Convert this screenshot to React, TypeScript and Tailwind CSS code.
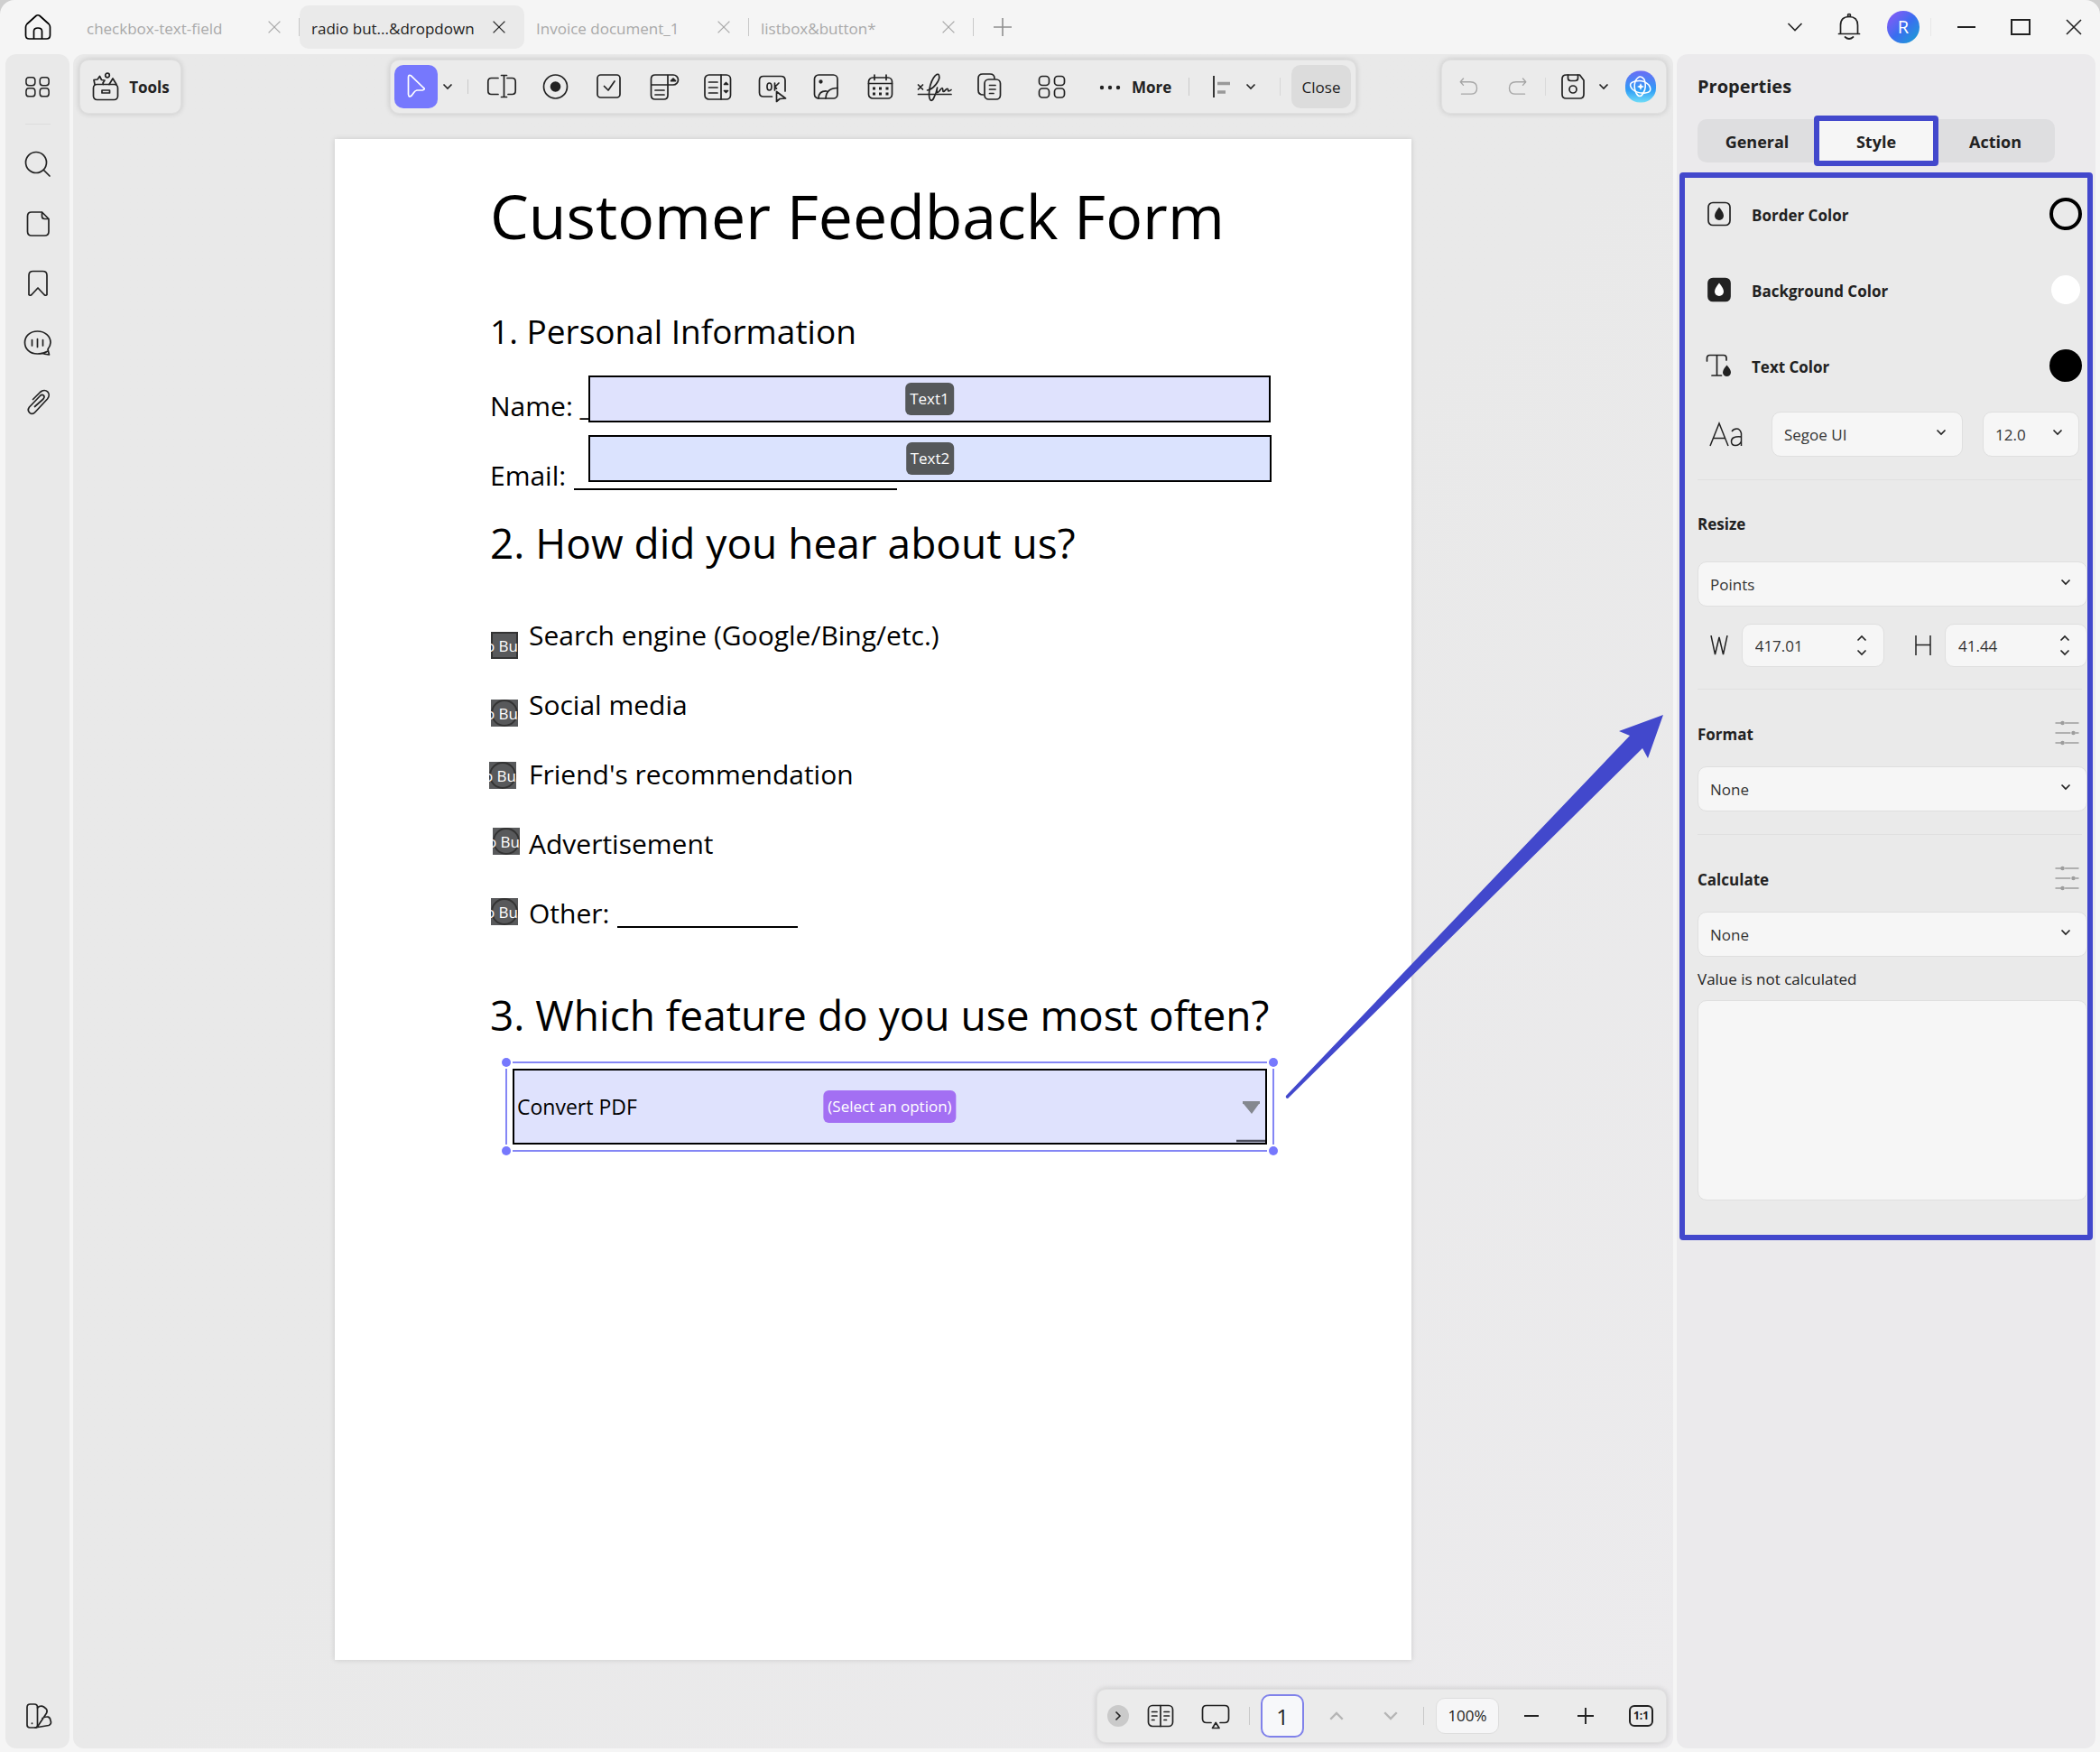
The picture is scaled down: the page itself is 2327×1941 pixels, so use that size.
import { useState, type ReactNode } from "react";

function Icon({ children, size = "size-8", className = "" }: { children: ReactNode; size?: string; className?: string }) {
  return (
    <svg
      viewBox="0 0 32 32"
      fill="none"
      stroke="currentColor"
      strokeWidth={1.7}
      strokeLinecap="round"
      strokeLinejoin="round"
      aria-hidden="true"
      className={`${size} shrink-0 ${className}`}
    >
      {children}
    </svg>
  );
}

const Chevron = ({ className = "" }: { className?: string }) => (
  <svg viewBox="0 0 12 12" fill="none" stroke="currentColor" strokeWidth={1.6} aria-hidden="true" className={`size-3 shrink-0 ${className}`}>
    <path d="M1.5 3.5 6 8l4.500-4.500" />
  </svg>
);

const Cross = ({ className = "" }: { className?: string }) => (
  <svg viewBox="0 0 20 20" fill="none" stroke="currentColor" strokeWidth={1.6} aria-hidden="true" className={`shrink-0 ${className}`}>
    <path d="M2 2l16 16M18 2 2 18" />
  </svg>
);

const Divider = ({ className = "" }: { className?: string }) => <span className={`w-px shrink-0 bg-[#c9c9c9] ${className}`} />;

const gridIcon = (
  <>
    <rect x="1.500" y="4.500" width="11" height="10" rx="3.500" />
    <rect x="18.500" y="4.500" width="11" height="10" rx="3.500" />
    <rect x="1.500" y="18" width="11" height="10" rx="3.500" />
    <rect x="18.500" y="18" width="11" height="10" rx="3.500" />
  </>
);

const tabs = [
  { name: "checkbox-text-field", active: false, divider: true },
  { name: "radio but...&dropdown", active: true, divider: false },
  { name: "Invoice document_1", active: false, divider: true },
  { name: "listbox&button*", active: false, divider: true },
];

const fieldTools: { label: string; icon: ReactNode }[] = [
  {
    label: "Text field",
    icon: (
      <>
        <path d="M12 6.500H4.500Q.8 6.500.8 10.500v10q0 4 3.700 4H12M22 6.500h5.500q3.700 0 3.700 4v10q0 4-3.700 4H23" />
        <path d="M18.500 3.500v24M15.500 3.500h6M15.500 27.500h6" />
      </>
    ),
  },
  {
    label: "Radio button",
    icon: (
      <>
        <circle cx="15.500" cy="16" r="13" />
        <circle cx="15.500" cy="16" r="5.800" fill="currentColor" stroke="none" />
      </>
    ),
  },
  {
    label: "Check box",
    icon: (
      <>
        <rect x="2" y="3" width="25" height="25" rx="3.500" />
        <path d="m9.500 15.500 4.500 4.500 7-10" />
      </>
    ),
  },
  {
    label: "Dropdown",
    icon: (
      <>
        <path d="M19.500 3H6Q1.500 3 1.500 7.500v18Q1.500 30 6 30h9.500q4.500 0 4.500-4.500V3M1.500 14H20M20 3h6a5.500 5.500 0 0 1 0 11h-6" />
        <path d="M6 20h10M6 25h10" />
        <path d="M23.500 9.700h5l-2.500-2.500z" fill="currentColor" />
      </>
    ),
  },
  {
    label: "List box",
    icon: (
      <>
        <rect x="1" y="3" width="28.500" height="27" rx="4.500" />
        <path d="M19 3v27M5.500 11H15M5.500 17H15M5.500 23H15" />
        <path d="M22.500 13.500h4l-2-2zM22.500 20.500h4l-2 2z" fill="currentColor" />
      </>
    ),
  },
  {
    label: "Button",
    icon: (
      <>
        <path d="M15.500 27H6Q1.500 27 1.500 22.500V9Q1.500 4.500 6 4.500h19.500Q30 4.500 30 9v12" />
        <ellipse cx="12.500" cy="16" rx="2.500" ry="4" />
        <path d="M18.500 12v8M23 12l-4.500 4.500 2 1.500" />
        <path d="M20.500 21.500v11l3.500-3 6.500-.5z" fill="#ebebeb" />
      </>
    ),
  },
  {
    label: "Image",
    icon: (
      <>
        <rect x="2.500" y="3" width="25.500" height="26" rx="4.500" />
        <path d="M7 29q0-8.500 9-8M15 29Q15.500 17.500 28 17.500" />
        <circle cx="9.500" cy="10.500" r="1.300" fill="currentColor" />
      </>
    ),
  },
  {
    label: "Date",
    icon: (
      <>
        <rect x="2.500" y="6" width="26" height="23" rx="4.500" />
        <path d="M2.500 12.500h26M9 3v5.500M22 3v5.500" />
        <path d="M7 18h3M14 18h3M21.500 18h3M7 24h3M14 24h3M21.500 24h3" strokeWidth="3" strokeLinecap="butt" />
      </>
    ),
  },
  {
    label: "Signature",
    icon: (
      <>
        <path d="M-2.500 14l5 5M2.500 14l-5 5M-2.500 24.500H34" />
        <path d="M7.500 20c6-.5 15-11 13-16.500C18.500-1.500 10 9 9.500 24c0 8 3 9 5 5 2.500-5 3.500-8 4-11.500.5-2-1.500 5.500.5 5s3.500-5 5-5 0 4 1.500 4 3-4 4.500-3 0 2.500 1 2.500 2-.5 3-1.500" />
      </>
    ),
  },
  {
    label: "Duplicate",
    icon: (
      <>
        <path d="M9.500 25Q4 25 4 20V7q0-5 5-5h8q5 0 5 5" />
        <rect x="11" y="8" width="17.500" height="22" rx="4.500" />
        <path d="M16.500 14.500H23M16.500 19H23M16.500 23.500H21" />
      </>
    ),
  },
];

const railTools: { label: string; icon: ReactNode }[] = [
  {
    label: "Search",
    icon: (
      <>
        <circle cx="14" cy="14" r="11.500" />
        <path d="m22.500 22.500 6.500 6.500" />
      </>
    ),
  },
  {
    label: "Pages",
    icon: <path d="M19.500 3H9Q4.500 3 4.500 7.500v17Q4.500 29 9 29h14.500q4.500 0 4.500-4.500v-14L20.500 3v4.500q0 3 3 3H28" />,
  },
  {
    label: "Bookmarks",
    icon: <path d="M6 28.500V7q0-4.500 4.500-4.500h11Q26 2.500 26 7v21.500q-1 1.500-3 0l-7-7.500-7 7.500q-2 1.500-3 0Z" />,
  },
  {
    label: "Comments",
    icon: (
      <>
        <path d="M26 25.500C22 28 19.500 28 15.500 28 7 28 1.500 22.500 1.500 15.500S7 3 15.500 3s14.500 5.500 14.500 12.500c0 3-1.500 5.500-3 7.500l1.500 6Q23 28.500 20.500 27.300" />
        <path d="M9.500 12.500v6.500M15.500 11.500v9M21.500 12.500v6.500" />
      </>
    ),
  },
  {
    label: "Attachments",
    icon: (
      <path d="M10.500 12.500 18.500 4.500c6-5.500 13 1.500 8 7.500L13 26.500c-4 4.500-10-.5-6.500-5.500L18.500 8.500c3-2.500 6 .5 3.500 3.500L12.500 20.500" />
    ),
  },
];

const options = [
  { name: "Search engine (Google/Bing/etc.)", box: "left-[173px] top-[546px]", ring: "" },
  { name: "Social media", box: "left-[173px] top-[621px]", ring: "rounded-full" },
  { name: "Friend's recommendation", box: "left-[171px] top-[690px]", ring: "rounded-full" },
  { name: "Advertisement", box: "left-[175px] top-[763px]", ring: "rounded-full" },
  { name: "Other:", box: "left-[173px] top-[841px]", ring: "rounded-full" },
];

function TitleBar() {
  return (
    <header className="flex h-[60px] shrink-0 items-center rounded-t-2xl bg-[#f5f5f5]">
      <button aria-label="Home" className="flex w-[83px] items-center justify-center">
        <Icon>
          <path d="M4 12.500 14 3.500q2-1.500 4 0l10 9q1.500 1.500 1.500 3.500V25q0 4-4 4h-19q-4 0-4-4v-9q0-2 1.500-3.500ZM11.500 29v-8.500q0-3.500 4.500-3.500t4.500 3.500V29" />
        </Icon>
      </button>
      <nav className="flex" aria-label="Documents">
        {tabs.map((tab) => (
          <div
            key={tab.name}
            className={`relative flex h-12 w-[249px] items-center justify-between rounded-[10px] pr-[20px] pl-[13px] ${
              tab.active ? "bg-[#eaeaea] text-[#222]" : "text-[#a9a9a9]"
            }`}
          >
            <button className="pt-1 text-[17px] leading-6 whitespace-nowrap">{tab.name}</button>
            <button aria-label={`Close ${tab.name}`}>
              <Cross className="size-4" />
            </button>
            {tab.divider && <Divider className="absolute top-[14px] right-0 h-5" />}
          </div>
        ))}
      </nav>
      <button aria-label="New tab" className="ml-[22px] text-[#8f8f8f]">
        <svg viewBox="0 0 20 20" className="size-5" stroke="currentColor" strokeWidth={1.6} aria-hidden="true">
          <path d="M10 0v20M0 10h20" />
        </svg>
      </button>
      <div className="ml-auto flex text-[#222]">
        <button aria-label="More documents" className="flex w-[60px] items-center justify-center">
          <svg viewBox="0 0 18 18" className="size-[18px]" fill="none" stroke="currentColor" strokeWidth={1.6} aria-hidden="true">
            <path d="m1.500 5 7.500 7.500L16.500 5" />
          </svg>
        </button>
        <button aria-label="Notifications" className="flex w-[60px] items-center justify-center">
          <Icon>
            <path d="M4.500 23.500h23M6.500 23.500V14q0-9.500 9.500-9.500T25.500 14v9.500M11.500 27q4.500 4 9 0" />
            <circle cx="16" cy="3" r="1.500" />
          </Icon>
        </button>
        <button aria-label="Account" className="flex w-[60px] items-center justify-center">
          <span className="flex size-9 items-center justify-center rounded-full bg-linear-to-br from-[#8a55f7] via-[#3a6cf0] to-[#0aa0d0] text-[20px] leading-9 text-white">
            R
          </span>
        </button>
        <span className="flex w-[10px] items-center">
          <Divider className="h-5 opacity-30" />
        </span>
        <button aria-label="Minimize" className="flex w-[60px] items-center justify-center">
          <span className="h-[2px] w-5 bg-[#222]" />
        </button>
        <button aria-label="Maximize" className="flex w-[60px] items-center justify-center">
          <span className="h-[18px] w-[22px] border-2 border-[#222]" />
        </button>
        <button aria-label="Close window" className="flex w-[58px] items-center justify-center">
          <Cross className="size-5" />
        </button>
      </div>
    </header>
  );
}

function Rail() {
  return (
    <aside className="flex w-[71px] shrink-0 flex-col items-center rounded-xl bg-[#e9e9e9] pt-5 pb-5 text-[#222]">
      <button aria-label="Thumbnails">
        <Icon className="scale-90">{gridIcon}</Icon>
      </button>
      <span className="mt-[25px] mb-7 h-px w-7 bg-[#dcdcdc]" />
      <div className="flex flex-col gap-[34px]">
        {railTools.map((tool) => (
          <button key={tool.label} aria-label={tool.label}>
            <Icon>{tool.icon}</Icon>
          </button>
        ))}
      </div>
      <button aria-label="Themes" className="mt-auto">
        <Icon>
          <path d="M7.500 3h4.500q3.500 0 3.500 3.500v20q0 2.500-2.500 2.500H7q-3 0-3-3V6.500Q4 3 7.500 3Z" />
          <path d="m15.500 7 2-1.500q3-1 5 .5l2.500 2q2 2 .5 5L15.500 28M21 18.500q8-4 9 2.500l.5 2q0 2.500-2.500 3.500L13 29" />
          <path d="M9.500 24v.5" />
        </Icon>
      </button>
    </aside>
  );
}

const panelShadow = "rounded-[10px] border border-[#e0e0e0] bg-[#ebebeb] shadow-[0_0_6px_rgba(0,0,0,0.16)]";

function Toolbar() {
  return (
    <div className="grid grid-cols-[1fr_auto_1fr] items-center px-[7px] pt-[6px] text-[#222]">
      <button className={`flex h-[60px] w-[113px] items-center justify-center gap-[10px] ${panelShadow}`}>
        <Icon>
          <rect x="2.500" y="13.500" width="27" height="17" rx="4" />
          <path d="M12 20h8.500v3H12zM4 13.500 3 8.500l4-.5 2.500-3.500 2 4 3.500.5-2 3 .5 1.500M20 13.500l4-6.500 4 6.500" />
          <circle cx="18" cy="3.500" r="2.300" />
        </Icon>
        <span className="pt-[2px] text-[17px] leading-6 font-bold">Tools</span>
      </button>

      <div className={`flex h-[60px] w-[1071px] items-center pr-[5px] pl-1 ${panelShadow}`}>
        <button aria-label="Select" className="flex size-12 items-center justify-center rounded-[10px] bg-[#7678fd] text-white">
          <Icon>
            <path d="M7.500 5.500v19q.5 4 3.500 1.500l3-4q1-1.500 3-2h6q4-1 1-3L10.500 3.800q-3-1.300-3 1.700Z" />
          </Icon>
        </button>
        <Chevron className="ml-[5px]" />
        <Divider className="mr-[7px] ml-4 h-4" />
        {fieldTools.map((tool) => (
          <button key={tool.label} aria-label={tool.label} className="flex h-12 w-[60px] items-center justify-center">
            <Icon className="overflow-visible">{tool.icon}</Icon>
          </button>
        ))}
        <button aria-label="Arrange" className="ml-6 flex">
          <Icon>{gridIcon}</Icon>
        </button>
        <button className="ml-9 flex items-center gap-3 pt-[2px] text-[17px] leading-6 font-bold">
          <svg viewBox="0 0 24 6" className="h-[6px] w-6" fill="currentColor" aria-hidden="true">
            <circle cx="3" cy="3" r="2.200" />
            <circle cx="12" cy="3" r="2.200" />
            <circle cx="21" cy="3" r="2.200" />
          </svg>
          More
        </button>
        <Divider className="ml-auto h-5" />
        <button aria-label="Align" className="ml-[26px] flex items-center gap-4">
          <svg viewBox="0 0 20 24" className="h-6 w-5" aria-hidden="true">
            <path d="M1 0v24" stroke="#222" strokeWidth="1.800" />
            <path d="M5 8.500h14M5 18h9" stroke="#999" strokeWidth="3.500" />
          </svg>
          <Chevron />
        </button>
        <Divider className="mr-3 ml-[26px] h-5 opacity-60" />
        <button className="h-12 w-[66px] rounded-[10px] bg-[#dcdcdc] pt-[2px] text-[17px] leading-6">Close</button>
      </div>

      <div className={`ml-auto flex h-[60px] w-[250px] items-center pr-[10px] pl-[17px] ${panelShadow}`}>
        <button aria-label="Undo" className="flex text-[#a6a6a6]">
          <Icon size="size-[26px]">
            <path d="M8 5 4 9.500 8 14M4 9.500h13.500q9 0 9 8.500t-9 8H5.500" />
          </Icon>
        </button>
        <button aria-label="Redo" className="ml-[27px] flex text-[#a6a6a6]">
          <Icon size="size-[26px]">
            <path d="m24 5 4 4.500-4 4.500M28 9.500H14.500q-9 0-9 8.500t9 8h12" />
          </Icon>
        </button>
        <Divider className="ml-[18px] h-5 opacity-50" />
        <button aria-label="Save" className="ml-[14px] flex items-center gap-3">
          <Icon>
            <path d="M8.500 3h15L28 9v15.500q0 4.500-4.500 4.500h-15Q4 29 4 24.500v-17Q4 3 8.500 3Z" />
            <path d="M10.500 3v3.500q0 3 3 3h5q3 0 3-3V3" />
            <ellipse cx="16" cy="19" rx="4" ry="4" />
          </Icon>
          <Chevron />
        </button>
        <button aria-label="AI assistant" className="ml-auto">
          <svg viewBox="0 0 36 36" className="size-9" aria-hidden="true">
            <defs>
              <linearGradient id="ai" x1="0" y1="0" x2="0" y2="1">
                <stop offset="0" stopColor="#6a6cf5" />
                <stop offset="0.600" stopColor="#2f9cf6" />
                <stop offset="1" stopColor="#6fdcf7" />
              </linearGradient>
            </defs>
            <rect x="1" y="0.500" width="34" height="35" rx="16" fill="url(#ai)" />
            <g fill="none" stroke="#fff" strokeWidth="1.600">
              <path d="M12 12q5-9 10-2 3 8-1 15-4 7-8 0-3-6-1-13Z" />
              <path d="M12 12q9-2 15 4 5 8-4 9-8 1-14-4-6-7 3-9Z" />
            </g>
            <path d="m18 14 1.200 2.800L22 18l-2.800 1.200L18 22l-1.200-2.800L14 18l2.800-1.200z" fill="#fff" />
          </svg>
        </button>
      </div>
    </div>
  );
}

function FieldTag({ children, className }: { children: ReactNode; className: string }) {
  return (
    <span className={`pointer-events-none absolute top-1/2 left-1/2 -translate-x-1/2 -translate-y-1/2 rounded-md px-[5px] text-[17px] leading-9 whitespace-nowrap ${className}`}>
      {children}
    </span>
  );
}

function Document() {
  return (
    <article className="relative mx-auto mt-7 h-[1685px] w-[1193px] bg-white pt-[37px] pl-[172px] text-[30px] text-black shadow-[0_0_6px_rgba(0,0,0,0.14)]">
      <h1 className="text-[68px] leading-[96px] whitespace-nowrap">Customer Feedback Form</h1>
      <h2 className="mt-[52px] text-[37px] leading-[56px]">1. Personal Information</h2>
      <p className="mt-[31px] leading-[48px]">
        <label htmlFor="name">Name:</label> _
      </p>
      <p className="mt-[29px] flex leading-[48px]">
        <label htmlFor="email">Email:</label>
        <span className="ml-[9px] h-10 w-[358px] border-b-2 border-black" />
      </p>
      <h2 className="mt-[18px] text-[46px] leading-[64px] whitespace-nowrap">2. How did you hear about us?</h2>
      <ul className="mt-8 pl-[43px]">
        {options.map((option, i) => (
          <li key={option.name} className="flex h-[77px] items-center">
            <label htmlFor={`option-${i}`}>{option.name}</label>
            {option.name === "Other:" && <span className="ml-[9px] h-8 w-[200px] border-b-2 border-black" />}
          </li>
        ))}
      </ul>
      <h2 className="mt-[42px] text-[46px] leading-[64px] whitespace-nowrap">3. Which feature do you use most often?</h2>

      <div className="relative mt-5 ml-[17px] h-[100px] w-[852px] p-2">
        <span className="absolute inset-x-2 top-0 h-[2px] bg-[#8486f5]" />
        <span className="absolute inset-x-2 bottom-0 h-[2px] bg-[#8486f5]" />
        <span className="absolute inset-y-2 left-0 w-[2px] bg-[#8486f5]" />
        <span className="absolute inset-y-2 right-0 w-[2px] bg-[#8486f5]" />
        <span className="absolute -top-1 -left-1 size-[10px] rounded-full bg-[#7678fd]" />
        <span className="absolute -top-1 -right-1 size-[10px] rounded-full bg-[#7678fd]" />
        <span className="absolute -bottom-1 -left-1 size-[10px] rounded-full bg-[#7678fd]" />
        <span className="absolute -right-1 -bottom-1 size-[10px] rounded-full bg-[#7678fd]" />
        <div className="relative h-full">
          <select
            aria-label="Feature"
            className="h-full w-full appearance-none border-2 border-black bg-[#dfe2fd] pl-[3px] text-[23px] text-black"
          >
            <option>Convert PDF</option>
          </select>
          <FieldTag className="bg-[#a36ff3] text-white">(Select an option)</FieldTag>
          <svg viewBox="0 0 34 48" className="pointer-events-none absolute right-0 bottom-0 h-12 w-[34px]" aria-hidden="true">
            <path d="M7 0h19v3h-1l-8 11L8 3H7z" fill="#84888f" />
            <path d="M0 44h32" stroke="#4b4d5c" strokeWidth="2.500" />
          </svg>
        </div>
      </div>

      {/* form fields placed over the page text */}
      <div className="absolute top-[262px] left-[281px] h-[52px] w-[756px]">
        <input id="name" className="h-full w-full border-2 border-black bg-[#dfe2fd] px-2" />
        <FieldTag className="bg-[#55585a] text-white">Text1</FieldTag>
      </div>
      <div className="absolute top-[328px] left-[281px] h-[52px] w-[757px]">
        <input id="email" className="h-full w-full border-2 border-black bg-[#dbe3fe] px-2" />
        <FieldTag className="bg-[#55585a] text-white">Text2</FieldTag>
      </div>
      {options.map((option, i) => (
        <div key={option.name} className={`absolute flex size-[30px] items-center justify-center overflow-hidden bg-[#58595b] ${option.box}`}>
          <input
            id={`option-${i}`}
            type="radio"
            name="source"
            className={`absolute inset-0 appearance-none border-2 border-[#333] ${option.ring}`}
          />
          <span className="pointer-events-none relative pt-[2px] text-[17px] leading-6 whitespace-nowrap text-white">o But</span>
        </div>
      ))}

      <svg viewBox="0 0 420 427" className="pointer-events-none absolute top-[637px] left-[1053px] z-10 h-[427px] w-[420px]" aria-hidden="true">
        <path d="M419 1 370 19l12 5L1 423q-1 3 2 3L396 38l6 11Z" fill="#4248cc" />
      </svg>
    </article>
  );
}

function ViewBar() {
  return (
    <div className="mt-8 flex justify-end px-[7px] pb-[6px] text-[#222]">
      <div className={`flex h-[60px] w-[632px] items-center pl-[11px] ${panelShadow}`}>
        <button aria-label="Collapse" className="flex size-6 items-center justify-center rounded-full bg-[#cacaca]">
          <Chevron className="-rotate-90" />
        </button>
        <button aria-label="Page layout" className="ml-[19px]">
          <Icon>
            <rect x="2.500" y="4.500" width="27" height="23" rx="4.500" />
            <path d="M16 4.500v23M6.500 11.500H12M6.500 16H12M6.500 20.500H9M20 11.500h5.500M20 16h5.500M20 20.500h2.500" />
          </Icon>
        </button>
        <button aria-label="Present" className="ml-[29px]">
          <Icon>
            <path d="M11 23.500H6Q1.500 23.500 1.500 19V9Q1.500 4.500 6 4.500h20Q30.500 4.500 30.500 9v10q0 4.500-4.500 4.500h-5M12.500 29.500h7.500L16.200 23.500Z" />
          </Icon>
        </button>
        <Divider className="ml-[21px] h-5" />
        <input
          aria-label="Page"
          defaultValue="1"
          className="ml-3 h-12 w-12 rounded-[10px] border-2 border-[#8082ea] bg-[#f7f8fa] text-center text-[24px]"
        />
        <button aria-label="Previous page" className="ml-[6px] flex w-[60px] justify-center text-[#b5b5b5]">
          <Chevron className="scale-150 rotate-180" />
        </button>
        <button aria-label="Next page" className="flex w-[60px] justify-center text-[#b5b5b5]">
          <Chevron className="scale-150" />
        </button>
        <Divider className="ml-[6px] h-5" />
        <button className="ml-[13px] h-10 w-[70px] rounded-[10px] border border-[#dedede] bg-[#f6f6f7] text-[17px]">100%</button>
        <button aria-label="Zoom out" className="ml-[6px] flex w-[60px] justify-center">
          <span className="my-2 h-[2px] w-4 bg-[#222]" />
        </button>
        <button aria-label="Zoom in" className="flex w-[60px] justify-center">
          <svg viewBox="0 0 18 18" className="size-[18px]" stroke="currentColor" strokeWidth={1.9} aria-hidden="true">
            <path d="M9 0v18M0 9h18" />
          </svg>
        </button>
        <button
          aria-label="Actual size"
          className="ml-[18px] flex h-6 w-[27px] items-center justify-center rounded-md border-2 border-[#222] text-[12px] leading-3 font-bold"
        >
          1:1
        </button>
      </div>
    </div>
  );
}

const fieldBox = "rounded-[10px] border border-[#dfdfdf] bg-[#f6f6f6] text-[17px] text-[#333]";

function SelectBox({ id, label, value, className }: { id: string; label: string; value: string; className: string }) {
  return (
    <div className={`relative ${className}`}>
      <select id={id} aria-label={label} className={`h-full w-full appearance-none pt-[2px] pr-8 pl-[13px] ${fieldBox}`}>
        <option>{value}</option>
      </select>
      <Chevron className="pointer-events-none absolute top-[17px] right-[18px]" />
    </div>
  );
}

function NumberBox({ id, value }: { id: string; value: string }) {
  return (
    <div className="relative h-12 w-[158px]">
      <input id={id} defaultValue={value} className={`h-full w-full pl-[14px] ${fieldBox}`} />
      <span className="absolute top-[10px] right-[19px] flex flex-col gap-1">
        <button aria-label="Increase" className="block">
          <Chevron className="rotate-180" />
        </button>
        <button aria-label="Decrease" className="block">
          <Chevron />
        </button>
      </span>
    </div>
  );
}

const SectionRule = () => <hr className="mr-[6px] ml-[14px] border-[#e0e0e0]" />;

const Sliders = () => (
  <Icon className="text-[#9d9d9d]">
    <path d="M3 5h6M13.500 5H28M3 16h16M25 16h3M3 27h6M13.500 27H28" strokeWidth="1.400" />
    <circle cx="10.500" cy="5" r="1.400" fill="currentColor" />
    <circle cx="22.500" cy="16" r="1.400" fill="currentColor" />
    <circle cx="10.500" cy="27" r="1.400" fill="currentColor" />
  </Icon>
);

const dropPath = "M16 8.500q5 6 5 9.500a5 5 0 0 1-10 0q0-3.500 5-9.500Z";

const colorRows = [
  {
    name: "Border Color",
    swatch: "size-9 border-4 border-black",
    icon: (
      <>
        <rect x="4" y="3.500" width="24" height="25" rx="5" />
        <path d={dropPath} fill="currentColor" stroke="none" />
      </>
    ),
  },
  {
    name: "Background Color",
    swatch: "mx-[2px] size-8 bg-white",
    icon: (
      <>
        <rect x="4" y="3.500" width="24" height="25" rx="5" fill="currentColor" />
        <path d={dropPath} fill="#fff" stroke="none" />
      </>
    ),
  },
  {
    name: "Text Color",
    swatch: "size-9 bg-black",
    icon: (
      <>
        <path d="M2.500 11V7.500q0-3 3-3H21q3 0 3 3V10M13.500 4.500V27M8 27h10.500" />
        <path d="M24.500 15.500q4.500 5 4.500 8a4.500 4.500 0 0 1-9 0q0-3 4.500-8Z" fill="currentColor" stroke="none" />
      </>
    ),
  },
];

const panelTabs = ["General", "Style", "Action"];

function Properties() {
  const [tab, setTab] = useState("Style");

  return (
    <aside className="w-[464px] shrink-0 rounded-xl bg-[#ebeaec] px-[3px] pt-[22px] text-[#222]">
      <h2 className="pl-5 text-[20px] leading-7 font-bold">Properties</h2>
      <div role="tablist" className="mt-[22px] ml-5 grid h-12 w-[396px] grid-cols-3 rounded-[10px] bg-[#dedee0]">
        {panelTabs.map((name) => (
          <button key={name} role="tab" aria-selected={tab === name} onClick={() => setTab(name)} className="relative pt-[2px] text-[18px] font-bold">
            {tab === name && <span className="absolute -inset-x-[3px] -inset-y-1 rounded-sm border-[6px] border-[#4248cc] bg-[#f6f6f6]" />}
            <span className="relative">{name}</span>
          </button>
        ))}
      </div>

      <section className="mt-[11px] rounded-sm border-[6px] border-[#4248cc] bg-[#eaeaea] pb-[38px]">
        <div className="flex flex-col gap-12 pt-[22px] pr-[6px] pl-[22px]">
          {colorRows.map((row) => (
            <div key={row.name} className="flex h-9 items-center">
              <Icon>{row.icon}</Icon>
              <span className="pt-1 pl-5 text-[17px] leading-6 font-bold">{row.name}</span>
              <button aria-label={row.name} className={`ml-auto rounded-full ${row.swatch}`} />
            </div>
          ))}
        </div>
        <div className="mt-[33px] mb-[25px] flex items-center pr-[9px] pl-[27px]">
          <svg viewBox="0 0 38 28" className="h-7 w-[38px]" fill="none" stroke="currentColor" strokeWidth={1.5} aria-hidden="true">
            <path d="M1 27 11 2l10 25M4.500 18.500h13M25 11q2-3 5.500-3t5 5v14M35.500 17q-11-1-11 5 0 4.500 4.500 4.500t6.500-4.500" />
          </svg>
          <SelectBox id="font" label="Font" value="Segoe UI" className="ml-[31px] h-[50px] w-[212px]" />
          <SelectBox id="font-size" label="Font size" value="12.0" className="ml-[22px] h-[50px] w-[107px]" />
        </div>
        <SectionRule />

        <h3 className="mt-[37px] pl-[14px] text-[17px] leading-6 font-bold">Resize</h3>
        <SelectBox id="unit" label="Unit" value="Points" className="mt-[29px] ml-[14px] h-[50px]" />
        <div className="mt-[19px] flex items-center justify-between pl-[28px]">
          <label htmlFor="width" aria-label="Width">
            <svg viewBox="0 0 20 22" className="h-[22px] w-5" fill="none" stroke="currentColor" strokeWidth={1.5} aria-hidden="true">
              <path d="m1 0 4.500 21L10 2l4.500 19L19 0" />
            </svg>
          </label>
          <NumberBox id="width" value="417.01" />
          <label htmlFor="height" aria-label="Height" className="pl-[20px]">
            <svg viewBox="0 0 18 22" className="h-[22px] w-[18px]" fill="none" stroke="currentColor" strokeWidth={1.5} aria-hidden="true">
              <path d="M1 0v22M17 0v22M1 10.500h16" />
            </svg>
          </label>
          <NumberBox id="height" value="41.44" />
        </div>
        <div className="h-6" />
        <SectionRule />

        <div className="mt-8 flex items-center justify-between pr-[6px] pl-[14px]">
          <h3 className="pt-1 text-[17px] leading-6 font-bold">Format</h3>
          <Sliders />
        </div>
        <SelectBox id="format" label="Format" value="None" className="mt-[21px] mb-[25px] ml-[14px] h-[50px]" />
        <SectionRule />

        <div className="mt-8 flex items-center justify-between pr-[6px] pl-[14px]">
          <h3 className="pt-1 text-[17px] leading-6 font-bold">Calculate</h3>
          <Sliders />
        </div>
        <SelectBox id="calculate" label="Calculate" value="None" className="mt-[21px] ml-[14px] h-[50px]" />
        <label htmlFor="expression" className="mt-[13px] ml-[14px] block text-[17px] leading-6">
          Value is not calculated
        </label>
        <div className="mt-[11px] ml-[14px]">
          <textarea id="expression" className={`block h-[222px] w-full resize-none p-3 ${fieldBox}`} />
        </div>
      </section>
    </aside>
  );
}

export default function App() {
  return (
    <div className="flex min-h-screen flex-col bg-[#cfcfcf] font-['Open_Sans',sans-serif]">
      <TitleBar />
      <div className="flex flex-1 gap-1 bg-[#f5f5f5] pr-[5px] pb-[5px] pl-[6px]">
        <Rail />
        <main className="min-w-0 flex-1 rounded-xl bg-linear-to-br from-[#e9e9e9] from-50% to-[#ecebed]">
          <Toolbar />
          <Document />
          <ViewBar />
        </main>
        <Properties />
      </div>
    </div>
  );
}
